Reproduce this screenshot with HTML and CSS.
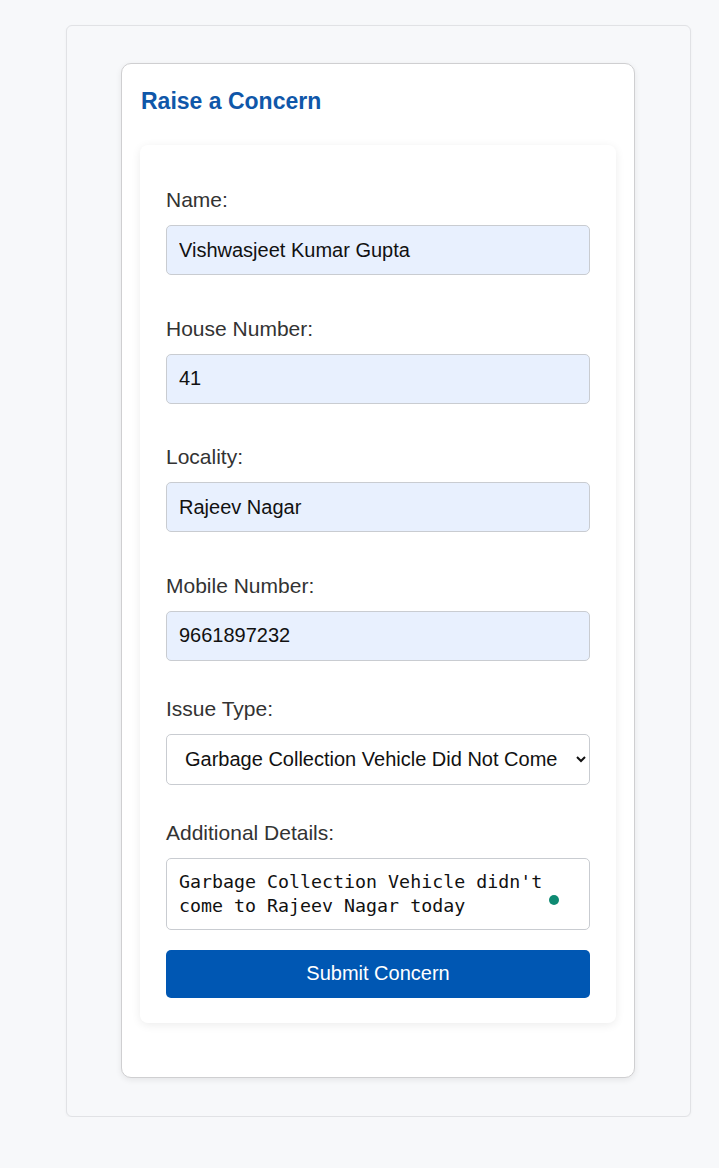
FILE: index.html
```html
<!DOCTYPE html>
<html lang="en">
<head>
<meta charset="utf-8">
<title>Raise a Concern</title>
<link rel="stylesheet" href="styles.css">
</head>
<body>
<div class="panel">
  <div class="card">
    <h2 class="title">Raise a Concern</h2>
    <form class="form">
      <label class="label first" for="name">Name:</label>
      <input class="field" id="name" type="text" value="Vishwasjeet Kumar Gupta">

      <label class="label" for="house">House Number:</label>
      <input class="field" id="house" type="text" value="41">

      <label class="label" for="locality">Locality:</label>
      <input class="field" id="locality" type="text" value="Rajeev Nagar">

      <label class="label" for="mobile">Mobile Number:</label>
      <input class="field" id="mobile" type="text" value="9661897232">

      <label class="label tight" for="issue">Issue Type:</label>
      <select class="select" id="issue">
        <option>Garbage Collection Vehicle Did Not Come</option>
      </select>

      <label class="label tight" for="details">Additional Details:</label>
      <div class="area-wrap">
        <textarea class="area" id="details">Garbage Collection Vehicle didn't come to Rajeev Nagar today</textarea>
        <span class="dot"></span>
      </div>

      <button class="submit" type="button">Submit Concern</button>
    </form>
  </div>
</div>
</body>
</html>
```
FILE: styles.css
```css
html, body {
  margin: 0;
  padding: 0;
}

body {
  background: #f7f8fa;
  font-family: "Liberation Sans", Arial, sans-serif;
  padding-top: 25px;
}

.panel {
  margin-left: 66px;
  width: 623px;
  background: #f7f8fa;
  border: 1px solid #e1e2e5;
  border-radius: 6px;
  box-shadow: 0 1px 3px rgba(0, 0, 0, 0.04);
  padding: 37px 0 38px 0;
}

.card {
  margin-left: 54px;
  width: 476px;
  background: #ffffff;
  border: 1px solid #cfcfd1;
  border-radius: 10px;
  box-shadow: 0 2px 6px rgba(0, 0, 0, 0.08);
  padding: 0 18px 54px 18px;
}

.title {
  margin: 24px 0 30px 1px;
  font-size: 23px;
  line-height: 27px;
  font-weight: bold;
  color: #0f57a9;
}

.form {
  display: flex;
  flex-direction: column;
  background: #ffffff;
  border-radius: 8px;
  box-shadow: 0 2px 10px rgba(0, 0, 0, 0.08);
  padding: 25px 26px 25px 26px;
}

.label {
  display: block;
  font-size: 21px;
  line-height: 24px;
  color: #333333;
  margin: 41.67px 0 13px 0;
}

.label.first {
  margin-top: 18px;
}

.label.tight {
  margin-top: 36px;
}

.field {
  box-sizing: border-box;
  width: 100%;
  height: 50px;
  margin: 0;
  padding: 12px 12px;
  border: 1px solid #c9ccd1;
  border-radius: 5px;
  background: #e8f0fe;
  font-family: "Liberation Sans", Arial, sans-serif;
  font-size: 20px;
  line-height: 24px;
  color: #111111;
}

.select {
  box-sizing: border-box;
  width: 100%;
  height: 51px;
  margin: 0;
  padding: 0 8px 0 14px;
  border: 1px solid #c9ccd1;
  border-radius: 5px;
  background: #ffffff;
  font-family: "Liberation Sans", Arial, sans-serif;
  font-size: 20px;
  color: #111111;
}

.area-wrap {
  position: relative;
}

.area {
  display: block;
  box-sizing: border-box;
  width: 100%;
  height: 72px;
  margin: 0;
  padding: 11px 12px;
  border: 1px solid #c9ccd1;
  border-radius: 5px;
  background: #ffffff;
  font-family: "DejaVu Sans Mono", "Liberation Mono", monospace;
  font-size: 18.3px;
  line-height: 24px;
  color: #111111;
  resize: none;
  overflow: hidden;
}

.dot {
  position: absolute;
  left: 383px;
  top: 37px;
  width: 10px;
  height: 10px;
  border-radius: 50%;
  background: #0e8a72;
}

.submit {
  margin-top: 20px;
  height: 48px;
  width: 100%;
  border: none;
  border-radius: 5px;
  background: #0057b3;
  color: #ffffff;
  font-family: "Liberation Sans", Arial, sans-serif;
  font-size: 20px;
  cursor: pointer;
}
```
